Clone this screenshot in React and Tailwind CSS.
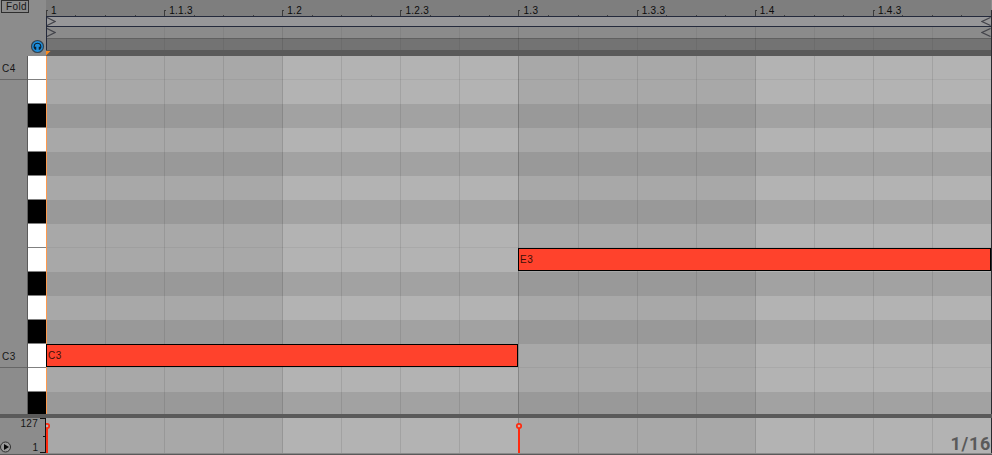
import React from 'react';

const notes = ['C4', 'B3', 'A#3', 'A3', 'G#3', 'G3', 'F#3', 'F3', 'E3', 'D#3', 'D3', 'C#3', 'C3', 'B2', 'A#2'];
const labels = ['1', '1.1.3', '1.2', '1.2.3', '1.3', '1.3.3', '1.4', '1.4.3'];

const isBlack = (note) => note.includes('#');

// beats alternate between a darker and a lighter shade
const beats = [
    { width: 'w-[236px]', dark: true },
    { width: 'w-[236px]', dark: false },
    { width: 'w-[237px]', dark: true },
    { width: 'w-[236px]', dark: false },
];

const GridLines = ({ className = '' }) => (
    <svg className={`absolute inset-0 w-full h-full pointer-events-none ${className}`} shapeRendering="crispEdges">
        {Array.from({ length: 15 }, (_, i) => (
            <rect
                key={i}
                x={Math.round((i + 1) * 59.07 - 0.1)}
                y="0"
                width="1"
                height="100%"
                fill="#000"
                fillOpacity={i === 7 ? 0.2 : (i + 1) % 4 === 0 ? 0.16 : 0.09}
            />
        ))}
    </svg>
);

const LoopBar = ({ className }) => (
    <div className={`flex justify-between items-center ${className}`}>
        <svg width="10" height="9" fill="none" stroke="#42434a" strokeWidth="1.2">
            <path d="M1 0.5L9 4.5L1 8.5" />
        </svg>
        <svg width="10" height="9" fill="none" stroke="#42434a" strokeWidth="1.2">
            <path d="M9.5 0.5L1 4.5L9.5 8.5" />
        </svg>
    </div>
);

const Ruler = () => (
    <div className="relative h-4 bg-[#7e7e7e] flex overflow-hidden">
        <svg className="absolute inset-0 w-full h-full" shapeRendering="crispEdges">
            {Array.from({ length: 32 }, (_, i) => {
                const x = Math.round(i * 29.535 - 0.1);
                return i % 4 === 0 ? (
                    <path key={i} d={`M${x} 10h2v1h-1v5h-1z`} fill="#3c3c3c" />
                ) : (
                    <rect key={i} x={x} y="15" width="1" height="1" fill="#404040" />
                );
            })}
        </svg>
        {labels.map((label) => (
            <span key={label} className="relative w-[118.14px] shrink-0 pl-[5px] pt-[5px] text-[10px] leading-3 tracking-[0.3px] text-[#0c0c0c]">
                {label}
            </span>
        ))}
    </div>
);

const Clip = ({ name, className }) => (
    <div className={`absolute h-[23px] border border-black bg-[#ff422c] pl-px text-[10px] leading-[21px] tracking-[0.5px] text-[#401008] ${className}`}>
        {name}
    </div>
);

const NoteGrid = () => (
    <div className="relative h-[358px] flex overflow-hidden">
        {beats.map((beat, b) => (
            <div key={b} className={`${beat.width} shrink-0`}>
                {notes.map((note) => (
                    <div
                        key={note}
                        className={`h-6 ${
                            isBlack(note)
                                ? beat.dark ? 'bg-[#999999]' : 'bg-[#a2a2a2]'
                                : beat.dark ? 'bg-[#a8a8a8]' : 'bg-[#b3b3b3]'
                        } ${['C4', 'F3', 'C3'].includes(note) ? 'border-b border-black/5' : ''}`}
                    />
                ))}
            </div>
        ))}
        <GridLines />
        <div className="absolute left-0 top-0 w-px h-full bg-[#ff9a4d]" />
        <Clip name="C3" className="left-0 top-[288px] w-[472px]" />
        <Clip name="E3" className="left-[472px] top-[192px] w-[473px]" />
    </div>
);

const Keyboard = () => (
    <div className="h-[358px] flex overflow-hidden">
        <div className="w-7 border-r border-[#5c5c5c] text-[10px] tracking-[0.5px] text-[#161616] bg-[#8c8c8c]">
            <div className="h-6 border-b border-[#666666] pl-0.5 leading-[26px]">C4</div>
            <div className="h-[264px]" />
            <div className="h-6 border-b border-[#666666] pl-0.5 leading-[26px]">C3</div>
        </div>
        <div className="w-[18px]">
            {notes.map((note) => (
                <div key={note} className={`h-6 border-b border-[#808080] ${isBlack(note) ? 'bg-black' : 'bg-white'}`} />
            ))}
        </div>
    </div>
);

const Velocity = () => (
    <div className="relative h-[35px] flex">
        {beats.map((beat, b) => (
            <div key={b} className={`${beat.width} shrink-0 ${beat.dark ? 'bg-[#a8a8a8]' : 'bg-[#b3b3b3]'}`} />
        ))}
        <GridLines />
        <svg className="absolute inset-0 w-full h-full" fill="none" stroke="#ff2a0f">
            <path d="M1 10v25M473 10v25" strokeWidth="2" />
            <circle cx="1" cy="8" r="2.2" fill="#b3b3b3" strokeWidth="1.7" />
            <circle cx="473" cy="8" r="2.2" fill="#c4b0ac" strokeWidth="1.7" />
        </svg>
        <span className="absolute right-0 bottom-[-1px] font-[Roboto,sans-serif] font-bold text-[18px] leading-5 tracking-[0.7px] text-[#5a5a5a]">
            1/16
        </span>
    </div>
);

const App = () => {
    return (
        <div className="w-[992px] h-[455px] overflow-hidden bg-[#8c8c8c] font-['Liberation_Sans',sans-serif] flex flex-col">
            <div className="flex h-[414px]">
                <div className="w-[46px] flex flex-col">
                    <div className="h-14 flex flex-col justify-between">
                        <div className="ml-px w-[28px] h-[13px] border border-[#2e2e2e] text-[10px] leading-[11px] tracking-[0.4px] pl-1 text-[#161616]">Fold</div>
                        <svg className="self-end mr-px mb-[2px]" width="15" height="15" viewBox="0 0 15 15">
                            <circle cx="7.5" cy="7.5" r="6" fill="#1c8ddb" stroke="#33424e" strokeWidth="1.2" />
                            <path d="M4.8 9.8C3.2 6.6 4.8 4.3 7.5 4.3S11.8 6.6 10.2 9.8" fill="none" stroke="#0e1d2a" strokeWidth="1.1" />
                            <path d="M5.5 7.8v3M9.5 7.8v3" stroke="#0e1d2a" strokeWidth="1.5" />
                        </svg>
                    </div>
                    <Keyboard />
                </div>
                <div className="w-[945px] flex flex-col">
                    <div className="relative h-14">
                        <Ruler />
                        <LoopBar className="h-[11px] border-y border-[#242a3c] bg-[#979799]" />
                        <div className="relative">
                            <LoopBar className="h-3 border-b border-[#606060] bg-[#8b8b8b]" />
                            <div className="h-[11px] bg-[#737373]" />
                            <GridLines className="opacity-60" />
                        </div>
                        <div className="h-1.5 bg-[#5a5a5a]" />
                        <div className="absolute left-0 top-4 w-px h-[34px] bg-[#242a3c]" />
                        <svg className="absolute left-0 bottom-0" width="5" height="5">
                            <path d="M0 0H4.5L0 4.5z" fill="#ff8a1c" />
                        </svg>
                    </div>
                    <NoteGrid />
                </div>
                <div className="w-px mt-2.5 bg-[#2b2b30]" />
            </div>
            <div className="h-1 bg-[#5a5a5a]" />
            <div className="flex">
                <div className="w-[46px] h-[35px] flex justify-end">
                    <div className="flex-1 flex flex-col justify-between text-[10px] leading-3 text-[#161616] text-right pr-0.5">
                        <span className="tracking-[0.3px]">127</span>
                        <div className="flex justify-between items-end">
                            <svg width="12" height="12" viewBox="0 0 12 12">
                                <circle cx="5.5" cy="6" r="5" fill="#999" stroke="#303030" />
                                <path d="M4 3l5 3L4 9z" fill="#0a0a0a" />
                            </svg>
                            <span className="leading-[11px]">1</span>
                        </div>
                    </div>
                    <svg width="6" height="35" fill="none" stroke="#111" shapeRendering="crispEdges">
                        <path d="M0 0.5H5.5V34.5H0M3 18.5H6" />
                    </svg>
                </div>
                <div className="w-[945px]">
                    <Velocity />
                </div>
                <div className="w-px bg-[#2b2b30]" />
            </div>
            <div className="h-px bg-[#8a8a8a]" />
            <div className="h-px bg-[#5a5a5a]" />
        </div>
    );
};

export default App;
